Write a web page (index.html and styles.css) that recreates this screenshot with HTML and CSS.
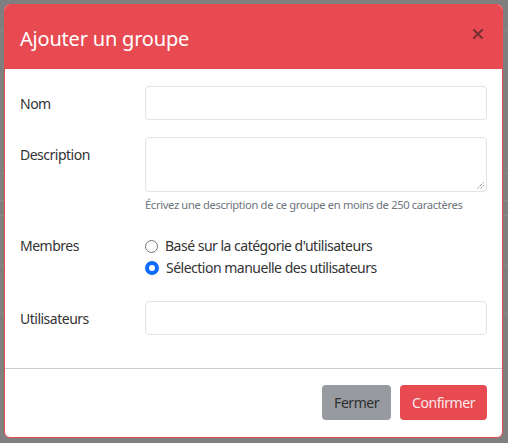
FILE: index.html
```html
<!DOCTYPE html>
<html lang="fr">
<head>
<meta charset="utf-8">
<title>Ajouter un groupe</title>
<link rel="stylesheet" href="styles.css">
</head>
<body>
<div class="backdrop">
  <div class="bg-line l1"></div>
  <div class="bg-line l2"></div>
  <div class="bg-line l3"></div>
  <div class="bg-line l4"></div>
  <div class="bg-line l5"></div>
  <div class="bg-line l6"></div>
</div>
<div class="modal">
  <div class="modal-header">
    <h5 class="modal-title">Ajouter un groupe</h5>
    <span class="close"><svg width="10" height="10" viewBox="0 0 10 10"><path d="M1 1 L9 9 M9 1 L1 9" stroke="#7a2f33" stroke-width="2" stroke-linecap="square"/></svg></span>
  </div>
  <div class="modal-body">
    <div class="row row-center">
      <label class="lbl">Nom</label>
      <div class="field"><div class="input"></div></div>
    </div>
    <div class="row row-top">
      <label class="lbl lbl-pad">Description</label>
      <div class="field">
        <div class="textarea"><svg class="grip" width="7" height="7" viewBox="0 0 7 7"><path d="M6.5 0.5 L0.5 6.5 M6.5 3.5 L3.5 6.5" stroke="#555" stroke-width="1" stroke-dasharray="1 1"/></svg></div>
        <div class="help">Écrivez une description de ce groupe en moins de 250 caractères</div>
      </div>
    </div>
    <div class="row row-top row-members">
      <label class="lbl">Membres</label>
      <div class="field">
        <div class="radio"><span class="rb"></span>Basé sur la catégorie d'utilisateurs</div>
        <div class="radio"><span class="rb checked"></span>Sélection manuelle des utilisateurs</div>
      </div>
    </div>
    <div class="row row-center row-users">
      <label class="lbl">Utilisateurs</label>
      <div class="field"><div class="input"></div></div>
    </div>
  </div>
  <div class="modal-footer">
    <button class="btn btn-grey">Fermer</button>
    <button class="btn btn-red">Confirmer</button>
  </div>
</div>
</body>
</html>
```
FILE: styles.css
```css
html, body {
  margin: 0;
  padding: 0;
}
body {
  width: 508px;
  height: 443px;
  background: #7f7f7f;
  font-family: "Noto Sans", "Open Sans", sans-serif;
  font-size: 14px;
  letter-spacing: -0.5px;
  color: #333;
  position: relative;
  overflow: hidden;
}
.backdrop {
  position: absolute;
  inset: 0;
}
.bg-line {
  position: absolute;
  left: 0;
  right: 0;
  height: 1px;
  background: #8a8a8a;
}
.l1 { top: 30px; }
.l2 { top: 173px; }
.l3 { top: 200px; }
.l4 { top: 215px; }
.l5 { top: 265px; }
.l6 { top: 313px; }

.modal {
  position: absolute;
  left: 4px;
  top: 4px;
  width: 497px;
  height: 432px;
  background: #fff;
  border: 1px solid #e84a51;
  border-radius: 6px;
  overflow: hidden;
  display: flex;
  flex-direction: column;
}
.modal-header {
  background: #e84a51;
  height: 64px;
  padding: 0 15px;
  display: flex;
  align-items: center;
  justify-content: space-between;
  box-sizing: border-box;
}
.modal-title {
  margin: 0;
  font-size: 20px;
  font-weight: 400;
  letter-spacing: -0.2px;
  color: #fff;
  line-height: 24px;
  padding-top: 4px;
}
.close {
  display: flex;
  margin-right: 4px;
  margin-top: -7px;
}
.modal-body {
  padding: 17px 15px 33px;
  border-bottom: 1px solid #c9ced6;
}
.row {
  display: flex;
}
.row-center { align-items: center; }
.row-top { align-items: flex-start; margin-top: 17px; }
.row-members { margin-top: 22px; }
.row-users { margin-top: 22px; }
.lbl {
  width: 125px;
  flex: none;
  line-height: 21px;
}
.lbl-pad { padding-top: 7px; }
.field {
  flex: 1;
}
.input {
  height: 32px;
  border: 1px solid #dfe3e8;
  border-radius: 4px;
}
.textarea {
  height: 53px;
  border: 1px solid #dfe3e8;
  border-radius: 4px;
  position: relative;
}
.grip {
  position: absolute;
  right: 2px;
  bottom: 2px;
}
.help {
  margin-top: 4px;
  font-size: 11.2px;
  letter-spacing: -0.35px;
  line-height: 17px;
  color: #6c757d;
}
.radio {
  display: flex;
  align-items: center;
  line-height: 22px;
  height: 22px;
}
.rb {
  width: 13px;
  height: 13px;
  border: 1px solid #777;
  border-radius: 50%;
  margin-right: 7px;
  box-sizing: border-box;
  background: #fff;
}
.rb.checked {
  border: 4px solid #0d6efd;
  width: 14px;
  height: 14px;
}
.modal-footer {
  display: flex;
  justify-content: flex-end;
  gap: 9px;
  padding: 16px 15px;
}
.btn {
  font-family: inherit;
  font-size: 14px;
  letter-spacing: -0.45px;
  height: 35px;
  padding: 0 12px;
  border: none;
  border-radius: 4px;
}
.btn-grey {
  background: #979a9e;
  color: #2d2f33;
}
.btn-red {
  background: #e84a51;
  color: #fde9ea;
}
```
